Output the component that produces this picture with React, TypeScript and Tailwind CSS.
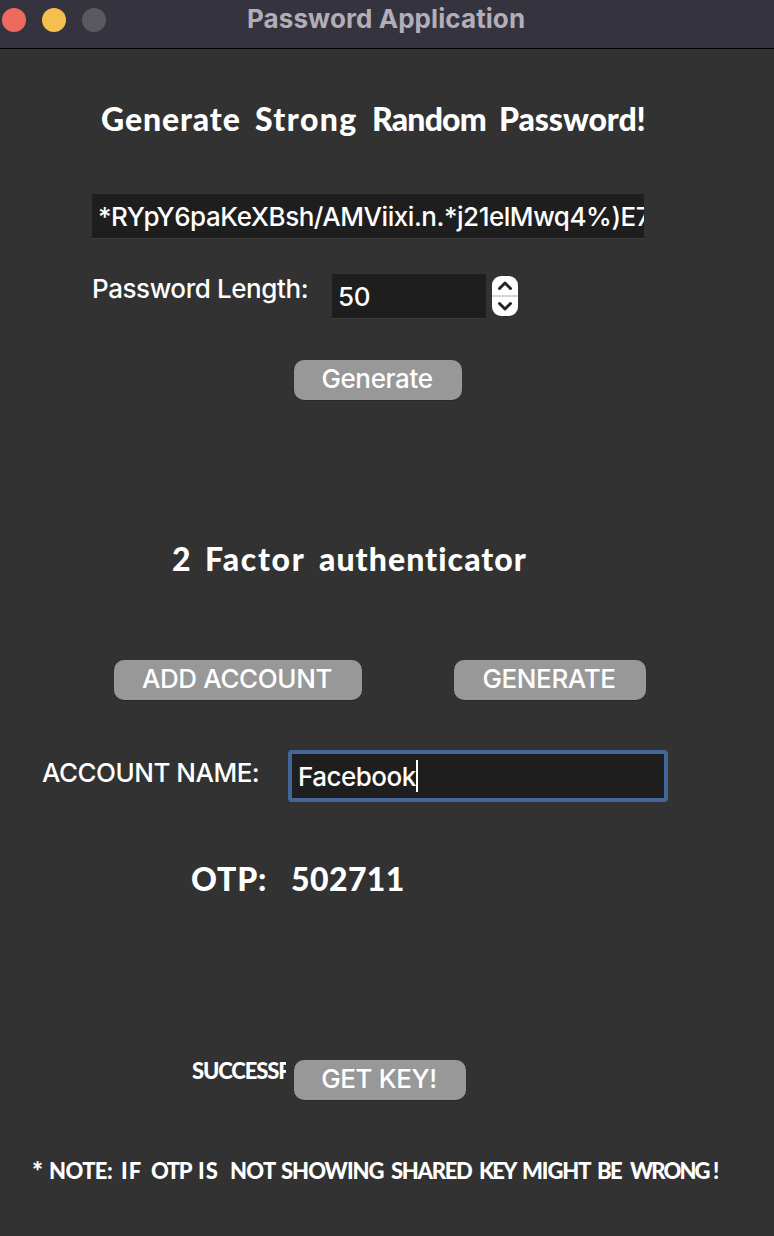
import type { ReactNode } from "react";

function GrayButton({ className, children }: { className: string; children: ReactNode }) {
  return (
    <button
      type="button"
      className={`h-10 shrink-0 rounded-[10px] bg-[#989898] pr-[2px] pb-[3px] text-center text-[26px] leading-[37px] tracking-[-0.38px] whitespace-nowrap text-white shadow-[0_1px_1px_rgba(0,0,0,0.2)] ${className}`}
    >
      {children}
    </button>
  );
}

function Word({ className, children }: { className: string; children: ReactNode }) {
  return <span className={`block shrink-0 whitespace-nowrap ${className}`}>{children}</span>;
}

const heading =
  "flex h-10 text-[32px] leading-[38px] font-black font-['Comic_Sans_MS','Chalkboard','Lato',sans-serif]";
const small =
  "flex h-7 text-[22px] leading-7 font-black font-['Comic_Sans_MS','Chalkboard','Lato',sans-serif]";

export default function App() {
  return (
    <div className="flex h-[1236px] w-[774px] flex-col overflow-hidden bg-[#323232] font-['Inter',sans-serif] text-[26px] font-[450] tracking-[-0.42px] text-white">
      <header className="flex h-[49px] shrink-0 border-b border-black bg-[#35333d]">
        <div className="flex w-[247px] gap-4 pt-2 pl-[2px]">
          <i className="size-6 rounded-full bg-[#ed6a5e]" />
          <i className="size-6 rounded-full bg-[#f5bf4f]" />
          <i className="size-6 rounded-full bg-[#5a5960]" />
        </div>
        <h1 className="pt-[3px] text-[26px] leading-8 font-bold tracking-[0.08px] whitespace-nowrap text-[#b2aeb9]">Password Application</h1>
      </header>

      <main className="flex flex-col">
        <h2 className={`mt-[51px] pl-[101px] ${heading}`}>
          <Word className="w-[154px] tracking-[0.9px]">Generate</Word>
          <Word className="w-[117px] tracking-[1.4px]">Strong</Word>
          <Word className="w-[127px] tracking-[-0.8px]">Random</Word>
          <Word className="w-[160px] tracking-[-0.1px]">Password!</Word>
        </h2>

        <div className="mt-[54px] ml-[92px] h-[44px] w-[552px] overflow-hidden bg-[#1e1e1e] pl-[6px] leading-[46px] tracking-[-0.46px] whitespace-nowrap shadow-[0_1px_0_#3b3b3b]">
          *RYpY6paKeXBsh/AMViixi.n.*j21elMwq4%)E7
        </div>

        <div className="mt-9 flex h-[45px] pl-[92px]">
          <label className="w-60 leading-[30px] whitespace-nowrap">Password Length:</label>
          <div className="h-[44px] w-[154px] bg-[#1e1e1e] pl-[6px] leading-[46px] shadow-[0_1px_0_#3b3b3b]">50</div>
          <svg className="mt-[2px] ml-[6px]" width="26" height="40" viewBox="0 0 26 40" fill="none">
            <rect width="26" height="40" rx="9" fill="#fff" />
            <rect y="19" width="26" height="2" fill="#d5d5d5" />
            <path d="M7.5 12.5 13 7 18.5 12.5M7.5 27.5 13 33 18.5 27.5" stroke="#262626" strokeWidth="3" strokeLinecap="round" strokeLinejoin="round" />
          </svg>
        </div>

        <GrayButton className="mt-[41px] ml-[294px] w-[168px]">Generate</GrayButton>

        <h2 className={`mt-[140px] pl-[172px] ${heading}`}>
          <Word className="w-[33px]">2</Word>
          <Word className="w-[114px] tracking-[1.7px]">Factor</Word>
          <Word className="w-[220px] tracking-[1.05px]">authenticator</Word>
        </h2>

        <div className="mt-20 flex pl-[114px]">
          <GrayButton className="w-[248px]">ADD ACCOUNT</GrayButton>
          <GrayButton className="ml-[92px] w-[192px]">GENERATE</GrayButton>
        </div>

        <div className="mt-[50px] flex pl-[42px]">
          <label className="w-[246px] leading-[46px] tracking-[-0.5px] whitespace-nowrap">ACCOUNT NAME:</label>
          <div className="flex h-[52px] w-[380px] items-start rounded-[4px] border-4 border-[#446597] bg-[#1e1e1e] pt-[6px] pl-[6px] leading-[34px]">
            <span className="w-[118px] tracking-[-0.5px] whitespace-nowrap">Facebook</span>
            <span className="h-8 w-[2px] bg-white" />
          </div>
        </div>

        <div className={`mt-[58px] pl-[191px] ${heading}`}>
          <Word className="w-[100px] tracking-[0.8px]">OTP:</Word>
          <Word className="w-[120px] tracking-[0.4px]">502711</Word>
        </div>

        <div className="mt-[160px] flex h-10 pl-[192px]">
          <div className={`-mt-[3px] w-[94px] overflow-hidden ${small}`}>
            <Word className="w-[120px] tracking-[-1.1px]">SUCCESSFUL</Word>
          </div>
          <GrayButton className="ml-2 w-[172px]">GET KEY!</GrayButton>
        </div>

        <p className={`mt-[57px] pl-[32px] ${small}`}>
          <Word className="w-[17px] text-[26px]">*</Word>
          <Word className="w-[72px] tracking-[-0.6px]">NOTE:</Word>
          <Word className="w-[30px] tracking-[1px]">IF</Word>
          <Word className="w-[47px] tracking-[-1.5px]">OTP</Word>
          <Word className="w-[32px] tracking-[1.2px]">IS</Word>
          <Word className="w-[51px] tracking-[-0.7px]">NOT</Word>
          <Word className="w-[110px] tracking-[-1px]">SHOWING</Word>
          <Word className="w-[88px] tracking-[-1.3px]">SHARED</Word>
          <Word className="w-[43px] tracking-[-2px]">KEY</Word>
          <Word className="w-[75px] tracking-[-1.1px]">MIGHT</Word>
          <Word className="w-[33px] tracking-[-1.5px]">BE</Word>
          <Word className="w-[83px] tracking-[-1.9px]">WRONG</Word>
          <Word className="w-[12px]">!</Word>
        </p>
      </main>
    </div>
  );
}
